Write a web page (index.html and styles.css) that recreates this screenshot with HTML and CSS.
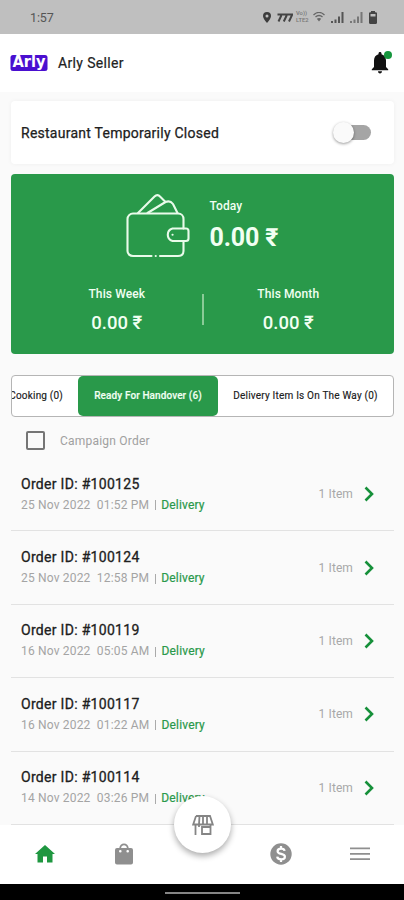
FILE: index.html
```html
<!DOCTYPE html>
<html lang="en">
<head>
<meta charset="utf-8">
<title>Arly Seller</title>
<link rel="stylesheet" href="styles.css">
</head>
<body>
<div class="screen">
  <div class="status">
    <span class="clock">1:57</span>
    <div class="status-icons">
      <svg width="8" height="11" viewBox="0 0 8 11"><path fill="#3c3c3c" fill-rule="evenodd" d="M4 0a4 4 0 0 1 4 4c0 2.700-4 7-4 7S0 6.700 0 4a4 4 0 0 1 4-4zm0 2.500a1.500 1.500 0 1 0 0 3 1.500 1.500 0 0 0 0-3z"/></svg>
      <svg class="sevens" width="16" height="9" viewBox="0 0 16 9"><path fill="none" stroke="#444" stroke-width="2" d="M.5 1.500h4.300L1.500 8.500M5.800 1.500h4.300L6.800 8.500M11 1.500h4.300L12 8.500"/></svg>
      <span class="volte"><span>Vo))</span><span>LTE2</span></span>
      <svg class="wifi" width="12" height="10" viewBox="0 0 12 10"><path fill="none" stroke="#666" stroke-width="1.300" d="M.5 3C4-.3 8-.3 11.500 3M2.500 5c2-2 5-2 7 0"/><path fill="#666" d="M3.800 6.800c1.500-1.200 3-1.200 4.400 0L6 9.500z"/></svg>
      <svg class="signal" width="13" height="11" viewBox="0 0 13 11"><path fill="#555" d="M0 9h2v2H0zM3.500 7.500h2V11h-2zM7 4.500h2V11H7zM10.500 0h2v11h-2z"/></svg>
      <svg class="signal" width="13" height="11" viewBox="0 0 13 11"><path fill="#777" d="M0 9h2v2H0zM3.500 7.500h2V11h-2zM7 4.500h2V11H7zM10.500 0h2v11h-2z"/></svg>
      <svg class="battery" width="8" height="13" viewBox="0 0 8 13"><path fill="#444" fill-rule="evenodd" d="M2 0h4v1.200h1.200L8 2v10l-.8 1H.8L0 12V2l.8-.8H2zM1.500 3v2.500h5V3z"/></svg>
    </div>
  </div>

  <header class="header">
    <svg class="logo" width="38" height="18" viewBox="0 0 38 18"><rect x=".5" y="1" width="37" height="16" rx="2.500" fill="#4a0fd0"/><text class="logo-text" x="2.500" y="13.300" textLength="33" lengthAdjust="spacingAndGlyphs">Arly</text></svg>
    <h1 class="brand">Arly Seller</h1>
    <div class="bell">
      <svg width="18" height="22" viewBox="0 0 18 22"><path fill="#111" d="M9 0c1 0 1.500.7 1.500 1.600v.6C13.600 3 15 5.500 15 8.500V15l2.200 2.200v1H.8v-1L3 15V8.500c0-3 1.400-5.500 4.500-6.300v-.6C7.500.7 8 0 9 0zM7 19.300h4c0 1.300-.8 2.100-2 2.100s-2-.8-2-2.100z"/></svg>
      <i class="dot"></i>
    </div>
  </header>

  <main class="content">
    <section class="closed-card">
      <span>Restaurant Temporarily Closed</span>
      <div class="toggle"><i class="knob"></i></div>
    </section>

    <section class="earnings">
      <div class="today">
        <svg width="64" height="66" viewBox="0 0 64 66" fill="none" stroke="#e9fbea" stroke-width="2.100" stroke-linecap="round" stroke-linejoin="round"><path d="M25.500 63H7c-3 0-5.500-2-5.500-5V26c0-3 2.500-5.500 5.500-5.500h45c3.500 0 5.500 2.500 5.500 5.500v9.500M57.500 49v9c0 3-2 5-5.500 5H34"/><path d="M60 35.500H46.500a6.500 6.500 0 0 0 0 12.500H60c1.500 0 2.500-1 2.500-2.500V38c0-1.500-1-2.500-2.500-2.500z"/><path d="M12 20L28.500 3.500c1.800-1.800 4-1.800 5.500 0l5.500 5.500M21.500 20L39.500 9c3-1.300 5.500-.8 7.500 2l4.500 9"/><path d="M29.700 63h.1M46.500 41.800h.1"/></svg>
        <div class="today-text"><div class="label">Today</div><div class="big">0.00 ₹</div></div>
      </div>
      <div class="periods">
        <div class="period"><div class="label">This Week</div><div class="amount">0.00 ₹</div></div>
        <i class="divider"></i>
        <div class="period"><div class="label">This Month</div><div class="amount">0.00 ₹</div></div>
      </div>
    </section>

    <div class="tabs">
      <div class="tab cooking"><span>Cooking (0)</span></div>
      <div class="tab active">Ready For Handover (6)</div>
      <div class="tab way">Delivery Item Is On The Way (0)</div>
    </div>

    <div class="campaign"><i class="checkbox"></i><span>Campaign Order</span></div>

    <div class="orders">
      <div class="order"><div><div class="order-id">Order ID: #100125</div><div class="meta"><span class="when">25 Nov 2022&nbsp; 01:52 PM</span><i class="bar"></i><b>Delivery</b></div></div><span class="items">1 Item</span><svg class="chevron" width="11" height="16" viewBox="0 0 11 16"><path d="M1.500 1.500L8 8l-6.500 6.500"/></svg></div>
      <div class="order"><div><div class="order-id">Order ID: #100124</div><div class="meta"><span class="when">25 Nov 2022&nbsp; 12:58 PM</span><i class="bar"></i><b>Delivery</b></div></div><span class="items">1 Item</span><svg class="chevron" width="11" height="16" viewBox="0 0 11 16"><path d="M1.500 1.500L8 8l-6.500 6.500"/></svg></div>
      <div class="order"><div><div class="order-id">Order ID: #100119</div><div class="meta"><span class="when">16 Nov 2022&nbsp; 05:05 AM</span><i class="bar"></i><b>Delivery</b></div></div><span class="items">1 Item</span><svg class="chevron" width="11" height="16" viewBox="0 0 11 16"><path d="M1.500 1.500L8 8l-6.500 6.500"/></svg></div>
      <div class="order"><div><div class="order-id">Order ID: #100117</div><div class="meta"><span class="when">16 Nov 2022&nbsp; 01:22 AM</span><i class="bar"></i><b>Delivery</b></div></div><span class="items">1 Item</span><svg class="chevron" width="11" height="16" viewBox="0 0 11 16"><path d="M1.500 1.500L8 8l-6.500 6.500"/></svg></div>
      <div class="order"><div><div class="order-id">Order ID: #100114</div><div class="meta"><span class="when">14 Nov 2022&nbsp; 03:26 PM</span><i class="bar"></i><b>Delivery</b></div></div><span class="items">1 Item</span><svg class="chevron" width="11" height="16" viewBox="0 0 11 16"><path d="M1.500 1.500L8 8l-6.500 6.500"/></svg></div>
    </div>
  </main>

  <nav class="nav">
    <div class="nav-item"><svg width="24" height="24" viewBox="0 0 24 24"><path fill="#1f9740" d="M10 20.500v-6h4v6h5.500V12H22L12 3 2 12h2.500v8.500z"/></svg></div>
    <div class="nav-item"><svg width="24" height="24" viewBox="0 0 24 24"><path fill="#8f8f8f" fill-rule="evenodd" d="M19 6h-2.300C16.500 3.300 14.500 1.500 12 1.500S7.500 3.300 7.300 6H5a2 2 0 0 0-2 2v12.500a2 2 0 0 0 2 2h14a2 2 0 0 0 2-2V8a2 2 0 0 0-2-2zM12 3.300c1.500 0 2.700 1.100 2.900 2.700H9.100c.2-1.600 1.400-2.700 2.900-2.700zM8.300 8a1.300 1.300 0 1 1-.01 2.600A1.300 1.300 0 0 1 8.300 8zm7.400 0a1.300 1.300 0 1 1-.01 2.600A1.300 1.300 0 0 1 15.700 8z"/></svg></div>
    <div class="nav-item"></div>
    <div class="nav-item"><svg width="24" height="24" viewBox="0 0 24 24"><circle cx="12" cy="12" r="10.700" fill="#8f8f8f"/><path fill="none" stroke="#fff" stroke-width="2.200" d="M15.600 8.900c-.3-1.500-1.600-2.300-3.500-2.300-2 0-3.500.9-3.500 2.600 0 3.700 7.300 1.700 7.300 5.500 0 1.800-1.500 2.700-3.700 2.700-2.300 0-3.800-1-4-2.800M12 4v2.500M12 17.500V20"/></svg></div>
    <div class="nav-item"><svg width="24" height="24" viewBox="0 0 24 24"><path stroke="#8f8f8f" stroke-width="1.800" d="M2 6.300h20M2 11.800h20M2 17.200h20"/></svg></div>
    <div class="fab"><svg width="22" height="22" viewBox="0 0 22 22" fill="none" stroke="#858585" stroke-width="1.800"><path d="M4 2h14l2.800 8.500H15V2M7.500 2L7 10.500H1.200L4 2M7 10.500h8M11 2v8.500M3.500 10.500V21M10 13h8.500v7H10zM18.500 10.500V13M7 10.500V13"/></svg></div>
  </nav>
  <div class="gesture"><i></i></div>
</div>
</body>
</html>
```
FILE: styles.css
```css
* { box-sizing: border-box; }
body { margin: 0; font-family: Roboto, sans-serif; color: #202020; }
svg, i { display: block; flex: none; }
.screen { width: 404px; height: 900px; display: flex; flex-direction: column; background: #fafafa; overflow: hidden; }
.status { flex: none; height: 34px; background: #bfbfbf; display: flex; justify-content: space-between; padding: 0 27px 0 30px; align-items: center; }
.clock { font-size: 12.500px; color: #555; letter-spacing: -.1px; padding-top: 1px; }
.status-icons { display: flex; align-items: center; }
.sevens { margin-left: 6px; }
.volte { display: flex; flex-direction: column; width: 14px; margin-left: 3px; font-size: 5.800px; line-height: 7px; font-weight: 500; color: #777; white-space: nowrap; }
.wifi { margin-left: 3px; }
.signal { margin-left: 6px; }
.battery { margin-left: 6px; }
.header { flex: none; height: 58px; background: #fff; display: flex; align-items: center; padding: 0 12px 0 10px; }
.logo-text { font-family: "DejaVu Sans", sans-serif; font-weight: 700; font-size: 15px; fill: #fff; }
.brand { margin: 0 auto 0 10px; font-size: 14px; font-weight: 400; letter-spacing: .35px; color: #222; -webkit-text-stroke: .2px #222; }
.bell { position: relative; width: 21px; height: 22px; }
.dot { position: absolute; right: 0; top: -1.500px; width: 8px; height: 8px; border-radius: 50%; background: #16963d; }
.content { flex: 1; padding: 9px 10px 0 11px; min-height: 0; }
.closed-card { height: 63px; background: #fff; border-radius: 4px; box-shadow: 0 0 5px #0000000c; display: flex; align-items: center; justify-content: space-between; padding: 0 23px 0 10px; font-size: 14px; letter-spacing: .25px; -webkit-text-stroke: .25px #222; }
.toggle { position: relative; width: 35px; height: 15px; border-radius: 8px; background: #a5a5a5; }
.knob { position: absolute; left: -3px; top: -3px; width: 21px; height: 21px; border-radius: 50%; background: #fafafa; box-shadow: 0 1px 3px #0006; }
.earnings { height: 180px; margin-top: 10px; border-radius: 4px; background: #29994a; color: #f1fff2; padding-top: 19px; }
.today { display: flex; padding-left: 115px; gap: 19.500px; }
.today-text { padding-top: 6px; }
.label { font-size: 12px; line-height: 14px; font-weight: 500; letter-spacing: .1px; }
.big { margin-top: 10px; font-size: 25px; line-height: 30px; font-weight: 700; letter-spacing: -.15px; }
.periods { display: flex; margin-top: 25px; padding: 0 21px; align-items: flex-start; }
.period { flex: 1; text-align: center; padding-top: 3px; }
.amount { margin-top: 11px; font-size: 18.500px; line-height: 22px; font-weight: 500; }
.divider { width: 2px; height: 31px; margin-top: 10px; background: #8acb97; }
.tabs { height: 42px; margin-top: 21px; border: 1px solid #b5b5b5; border-radius: 4px; background: #fff; display: flex; overflow: hidden; }
.tab { display: flex; align-items: center; justify-content: center; font-size: 10px; letter-spacing: .1px; white-space: nowrap; -webkit-text-stroke: .15px; padding-bottom: 1px; }
.cooking { flex: none; width: 66px; justify-content: flex-end; padding-right: 15px; letter-spacing: .2px; }
.active { flex: none; width: 140px; background: #29994a; color: #f1fff2; border-radius: 5px; font-weight: 500; }
.way { flex: 1; letter-spacing: .2px; }
.campaign { display: flex; align-items: center; height: 47px; padding-left: 15px; gap: 15px; font-size: 12px; color: #a0a0a0; letter-spacing: .22px; }
.checkbox { width: 19px; height: 19px; border: 2px solid #757575; border-radius: 2px; }
.orders { margin-top: -6px; }
.order { height: 73.400px; border-bottom: 1.500px solid #e2e2e2; display: flex; align-items: center; padding: 0 19px 0 10px; }
.order-id { font-size: 14px; line-height: 17px; letter-spacing: .3px; -webkit-text-stroke: .3px; }
.meta { display: flex; align-items: center; margin-top: 5px; font-size: 12px; line-height: 15px; color: #a4a4a4; letter-spacing: .18px; }
.bar { width: 1px; height: 10px; margin: 0 5px 0 6px; background: #aaa; }
.meta b { font-weight: 400; color: #29994a; -webkit-text-stroke: .2px; }
.items { margin-left: auto; font-size: 12px; color: #a8a8a8; letter-spacing: .1px; }
.chevron { margin-left: 11px; }
.chevron path { fill: none; stroke: #16903a; stroke-width: 2.600px; }
.nav { position: relative; flex: none; height: 59px; background: #fff; display: flex; padding: 0 5px 1px 6px; }
.nav-item { flex: 1; display: flex; align-items: center; justify-content: center; }
.fab { position: absolute; left: 174px; top: -29px; width: 57px; height: 57px; border-radius: 50%; background: #fff; box-shadow: 0 3px 6px #0005; display: flex; align-items: center; justify-content: center; }
.gesture { flex: none; height: 16px; background: #000; display: flex; justify-content: center; padding-top: 8px; }
.gesture i { width: 75px; height: 2px; background: #858585; }
```
